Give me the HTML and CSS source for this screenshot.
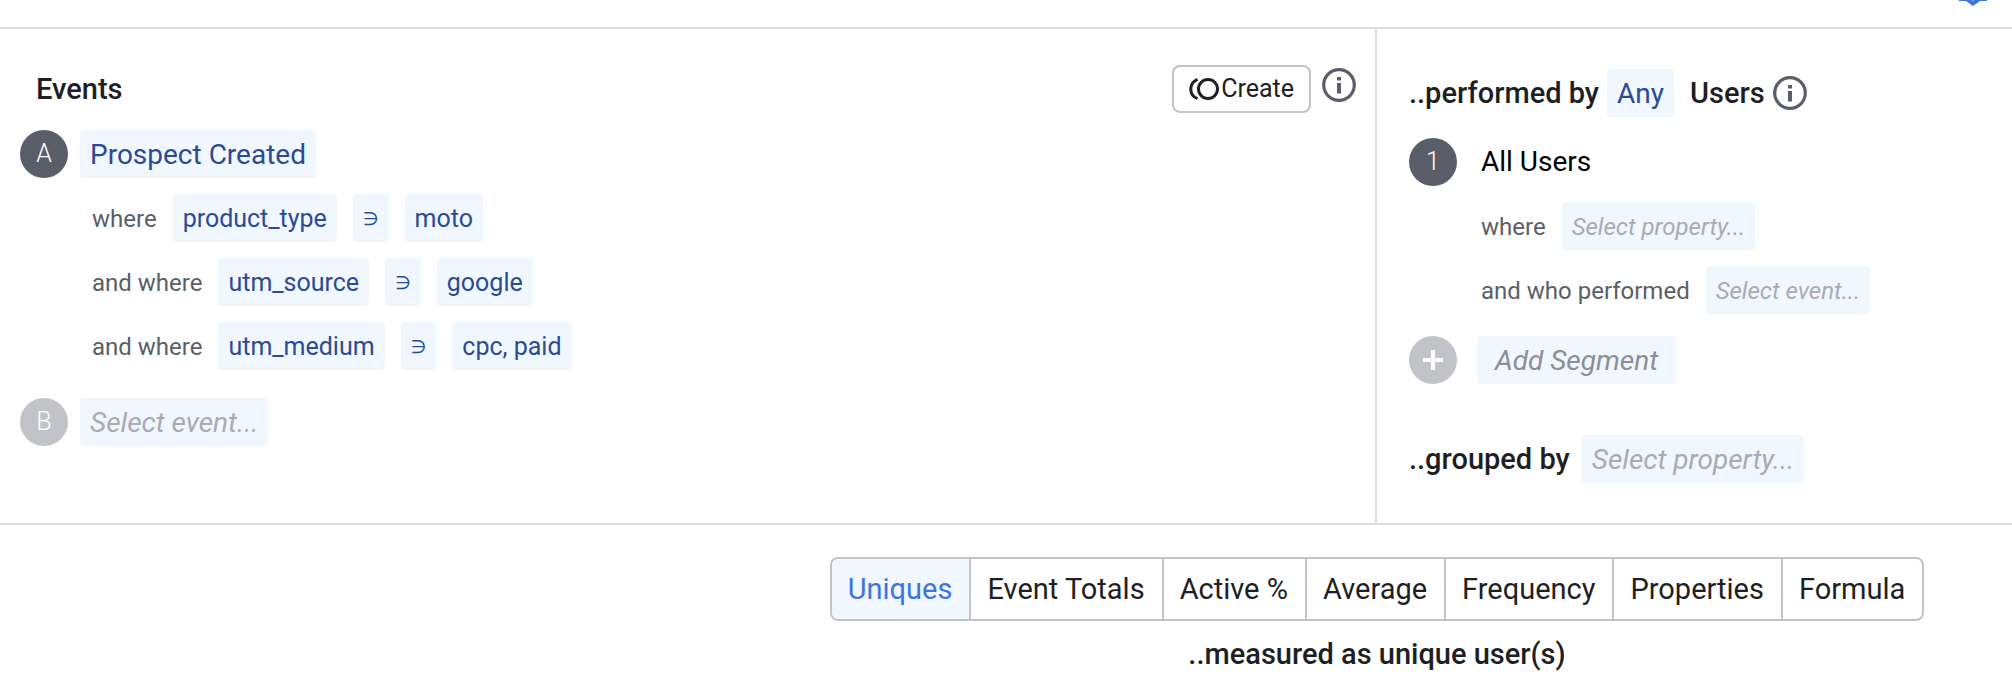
FILE: index.html
```
<!DOCTYPE html>
<html lang="en">
<head>
    <meta charset="UTF-8">
    <meta name="viewport" content="width=device-width, initial-scale=1.0">
    <title>Event Segmentation</title>
    <link rel="stylesheet" href="styles.css">
</head>
<body>
    <header class="topBar">
        <svg class="pin" width="28" height="6" viewBox="0 0 28 6" aria-hidden="true">
            <path d="M0 0H13L14 1L15 0H28V1H21L14 6L7 1H0Z" fill="#4073de"/>
        </svg>
    </header>
    <main class="builder">
        <section class="events">
            <div class="eventsHead">
                <h2>Events</h2>
                <button type="button" class="create">
                    <svg width="32" height="24" viewBox="0 0 32 24" fill="none" stroke="#1e1f24" stroke-width="3" aria-hidden="true">
                        <circle cx="20" cy="12" r="9.5"/>
                        <path d="M9.5 2.3C0.5 6 0.5 18 9.5 21.7"/>
                    </svg>
                    Create
                </button>
                <button type="button" class="info" aria-label="About events">
                    <svg width="34" height="34" viewBox="0 0 34 34" aria-hidden="true">
                        <circle cx="17" cy="17" r="15.3" fill="none" stroke="#5a5e68" stroke-width="3.2"/>
                        <path d="M15 9h4v3.4h-4zM15 15h4v10.4h-4z" fill="#5a5e68"/>
                    </svg>
                </button>
            </div>
            <div class="row">
                <span class="badge">A</span>
                <button type="button" class="chip">Prospect Created</button>
            </div>
            <div class="row filter">
                <span>where</span>
                <button type="button" class="chip">product_type</button>
                <button type="button" class="chip operator">∋</button>
                <button type="button" class="chip">moto</button>
            </div>
            <div class="row filter">
                <span>and where</span>
                <button type="button" class="chip">utm_source</button>
                <button type="button" class="chip operator">∋</button>
                <button type="button" class="chip">google</button>
            </div>
            <div class="row filter">
                <span>and where</span>
                <button type="button" class="chip">utm_medium</button>
                <button type="button" class="chip operator">∋</button>
                <button type="button" class="chip">cpc, paid</button>
            </div>
            <div class="row nextEvent">
                <span class="badge light">B</span>
                <button type="button" class="chip empty">Select event...</button>
            </div>
        </section>
        <section class="segments">
            <div class="row performed">
                <h2>..performed by</h2>
                <button type="button" class="chip">Any</button>
                <h2 class="users">Users</h2>
                <button type="button" class="info" aria-label="About segments">
                    <svg width="34" height="34" viewBox="0 0 34 34" aria-hidden="true">
                        <circle cx="17" cy="17" r="15.3" fill="none" stroke="#5a5e68" stroke-width="3.2"/>
                        <path d="M15 9h4v3.4h-4zM15 15h4v10.4h-4z" fill="#5a5e68"/>
                    </svg>
                </button>
            </div>
            <div class="row segment">
                <span class="badge">1</span>
                <span class="segmentName">All Users</span>
            </div>
            <div class="row filter">
                <span>where</span>
                <button type="button" class="chip empty">Select property...</button>
            </div>
            <div class="row filter">
                <span>and who performed</span>
                <button type="button" class="chip empty">Select event...</button>
            </div>
            <div class="row addSegment">
                <span class="badge light">
                    <svg width="20" height="20" viewBox="0 0 20 20" aria-hidden="true">
                        <path d="M10 0V20M0 10H20" stroke="#fff" stroke-width="4"/>
                    </svg>
                </span>
                <button type="button" class="chip add">Add Segment</button>
            </div>
            <div class="row grouped">
                <h2>..grouped by</h2>
                <button type="button" class="chip empty">Select property...</button>
            </div>
        </section>
    </main>
    <section class="measure">
        <div class="tabs">
            <button type="button" class="active" aria-pressed="true">Uniques</button>
            <button type="button">Event Totals</button>
            <button type="button">Active %</button>
            <button type="button">Average</button>
            <button type="button">Frequency</button>
            <button type="button">Properties</button>
            <button type="button">Formula</button>
        </div>
        <h2>..measured as unique user(s)</h2>
    </section>
</body>
</html>
```
FILE: styles.css
```
*{
    box-sizing: border-box;
    margin: 0;
    padding: 0;
}
body{
    background: #fff;
    color: #1e1f24;
    font-family: Roboto, "Liberation Sans", sans-serif;
    font-size: 28px;
    line-height: 36px;
}
h2{
    font-size: 29px;
    font-weight: 500;
    white-space: nowrap;
}
button{
    border: none;
    background: none;
    color: inherit;
    font: inherit;
    white-space: nowrap;
    cursor: pointer;
}
svg{
    display: block;
    flex-shrink: 0;
}
.topBar{
    display: flex;
    justify-content: flex-end;
    height: 29px;
    padding-right: 25px;
    border-bottom: 2px solid #dcdce2;
}
.builder{
    display: grid;
    grid-template-columns: 1fr 637px;
    border-bottom: 2px solid #dcdce2;
}
.events{
    padding: 36px 19px 77px 20px;
}
.eventsHead{
    display: flex;
    align-items: center;
    gap: 11px;
    height: 48px;
    padding-left: 16px;
    margin-bottom: 17px;
}
.eventsHead h2{
    margin-right: auto;
}
.eventsHead .info{
    align-self: flex-start;
    padding-top: 3px;
}
.create{
    display: flex;
    align-items: center;
    gap: 1px;
    height: 48px;
    padding: 0 15px 0 14px;
    border: 2px solid #c2c3c9;
    border-radius: 8px;
    font-size: 25px;
}
.row{
    display: flex;
    align-items: center;
    gap: 12px;
    height: 48px;
}
.badge{
    display: flex;
    align-items: center;
    justify-content: center;
    width: 48px;
    height: 48px;
    border-radius: 50%;
    background: #5a5e68;
    color: #fff;
    font-size: 25px;
    font-weight: 300;
}
.light{
    background: #c2c3c9;
}
.chip{
    height: 48px;
    padding: 2px 10px 0;
    border-radius: 4px;
    background: #f0f7ff;
    color: #2c4a94;
}
.filter{
    gap: 16px;
    margin-top: 16px;
    padding-left: 72px;
    color: #5a5e68;
    font-size: 24px;
}
.filter span{
    padding-top: 2px;
}
.events .filter .chip{
    font-size: 25px;
}
.events .filter .operator{
    font-family: "DejaVu Sans", sans-serif;
    font-size: 18px;
}
.empty{
    color: #a9abb3;
    font-style: italic;
}
.nextEvent{
    margin-top: 28px;
}
.segments{
    padding: 40px 32px;
    border-left: 2px solid #dcdce2;
}
.performed{
    gap: 8px;
}
.users{
    margin-left: 8px;
}
.segment{
    gap: 24px;
    margin-top: 21px;
}
.segmentName{
    color: #000;
}
.addSegment{
    gap: 20px;
    margin-top: 22px;
}
.add{
    padding: 2px 18px 0;
    color: #8c8e97;
    font-style: italic;
}
.grouped{
    margin-top: 51px;
}
.measure{
    display: flex;
    flex-direction: column;
    align-items: center;
    gap: 15px;
    padding: 32px 0 28px 742px;
}
.tabs{
    display: flex;
    border: 2px solid #c2c3c9;
    border-radius: 8px;
    overflow: hidden;
}
.tabs button{
    height: 60px;
    padding: 0 17px 0 16px;
    border-right: 2px solid #c2c3c9;
    font-size: 29px;
}
.tabs button:last-child{
    border-right: none;
}
.tabs .active{
    background: #f0f7ff;
    color: #4073de;
}
```
